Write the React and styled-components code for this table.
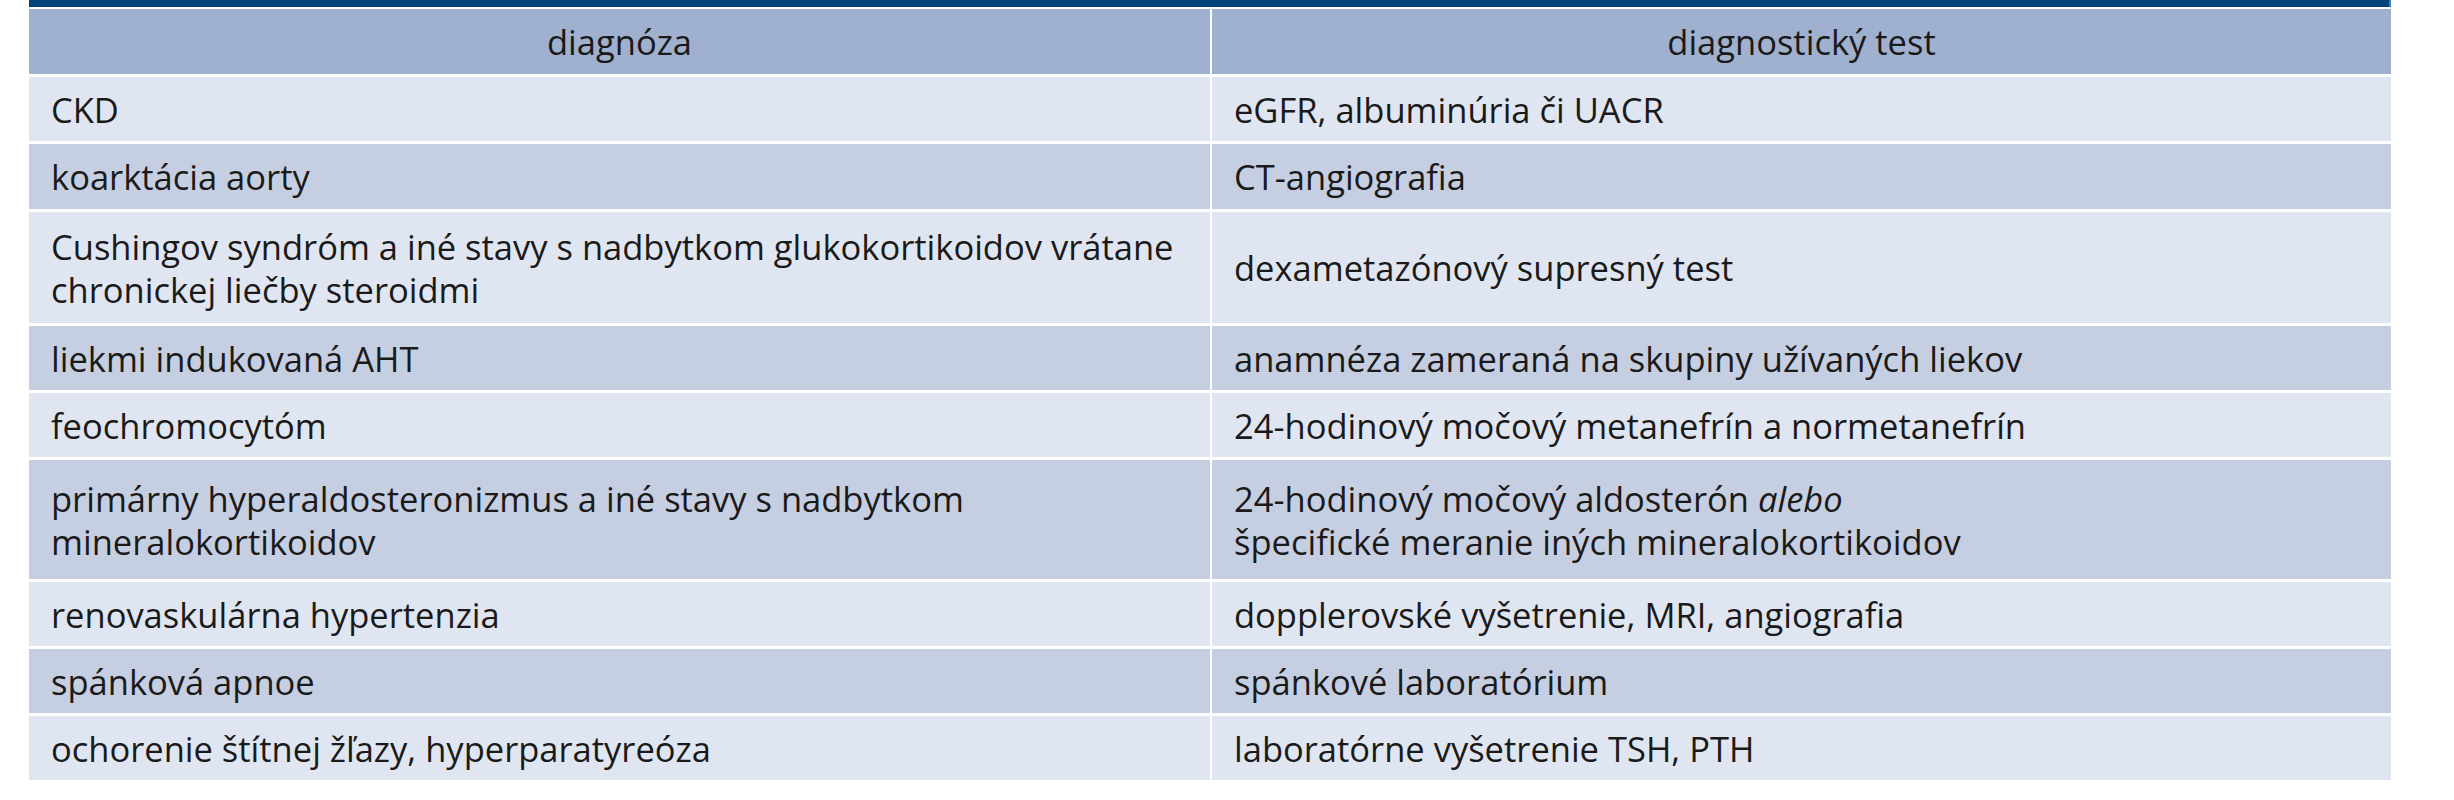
import React from 'react';
import styled, { createGlobalStyle } from 'styled-components';

const GlobalStyle = createGlobalStyle`
	html, body {
		margin: 0;
		padding: 0;
		background: #ffffff;
	}
	body {
		font-family: "Open Sans", "Noto Sans", "Liberation Sans", sans-serif;
		color: #1a1a1a;
	}
`;

const Page = styled.div`
	padding: 0 63px 0 29px;
	width: 2454px;
	box-sizing: border-box;
`;

const TopRule = styled.div`
	height: 7px;
	background: #00447c;
	border-right: 2px solid #3f7db4;
	margin-bottom: 2px;
`;

const Grid = styled.div`
	display: grid;
	grid-template-columns: 1181px 1fr;
	gap: 3px 2px;
`;

const HeadCell = styled.div`
	background: #a0b1cf;
	height: 65px;
	display: flex;
	align-items: center;
	justify-content: center;
	font-size: 34.5px;
`;

const Cell = styled.div`
	background: ${props => (props.$dark ? '#c6cfe2' : '#e0e6f1')};
	min-height: ${props => props.$height}px;
	display: flex;
	flex-direction: column;
	justify-content: center;
	padding: 0 22px;
	box-sizing: border-box;
	font-size: 34.5px;
	line-height: 43px;

	em {
		font-style: italic;
	}
`;

const rows = [
	{ diagnosis: 'CKD', test: 'eGFR, albuminúria či UACR', height: 64 },
	{ diagnosis: 'koarktácia aorty', test: 'CT-angiografia', height: 65 },
	{
		diagnosis: 'Cushingov syndróm a iné stavy s nadbytkom glukokortikoidov vrátane chronickej liečby steroidmi',
		test: 'dexametazónový supresný test',
		height: 111,
	},
	{ diagnosis: 'liekmi indukovaná AHT', test: 'anamnéza zameraná na skupiny užívaných liekov', height: 64 },
	{ diagnosis: 'feochromocytóm', test: '24-hodinový močový metanefrín a normetanefrín', height: 64 },
	{
		diagnosis: 'primárny hyperaldosteronizmus a iné stavy s nadbytkom mineralokortikoidov',
		test: (
			<>
				<div>24-hodinový močový aldosterón <em>alebo</em></div>
				<div>špecifické meranie iných mineralokortikoidov</div>
			</>
		),
		height: 119,
	},
	{ diagnosis: 'renovaskulárna hypertenzia', test: 'dopplerovské vyšetrenie, MRI, angiografia', height: 64 },
	{ diagnosis: 'spánková apnoe', test: 'spánkové laboratórium', height: 64 },
	{ diagnosis: 'ochorenie štítnej žľazy, hyperparatyreóza', test: 'laboratórne vyšetrenie TSH, PTH', height: 64 },
];

export default function App() {
	return (
		<Page>
			<GlobalStyle />
			<TopRule />
			<Grid>
				<HeadCell>diagnóza</HeadCell>
				<HeadCell>diagnostický test</HeadCell>
				{rows.map((row, i) => (
					<React.Fragment key={i}>
						<Cell $dark={i % 2 === 1} $height={row.height}>{row.diagnosis}</Cell>
						<Cell $dark={i % 2 === 1} $height={row.height}>{row.test}</Cell>
					</React.Fragment>
				))}
			</Grid>
		</Page>
	);
}
